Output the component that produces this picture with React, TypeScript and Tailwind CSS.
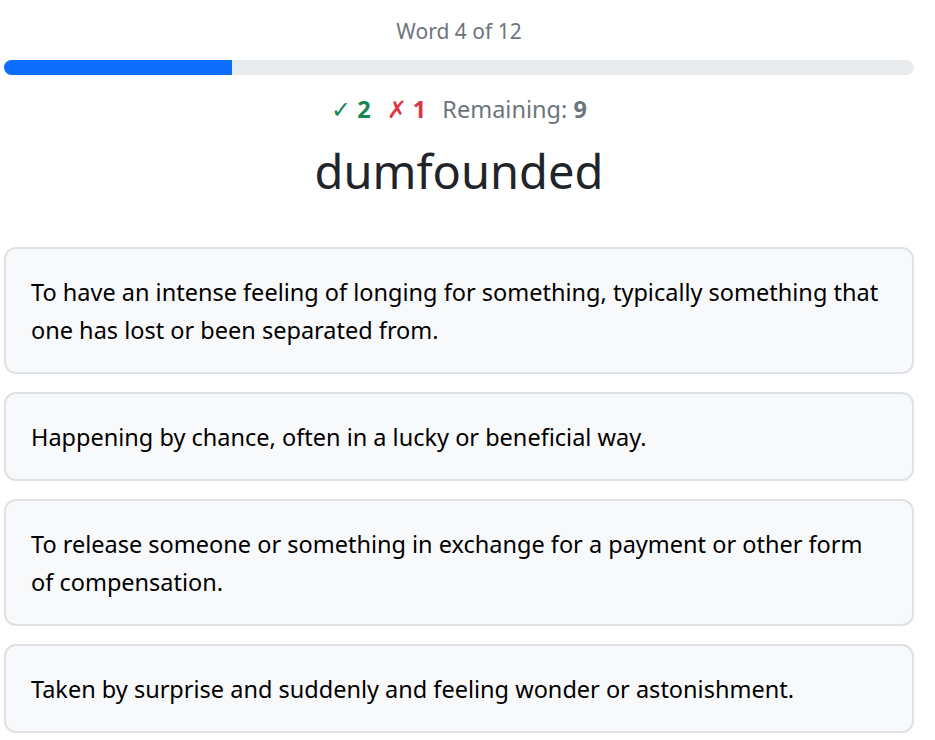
import React from "react";

const options = [
  "To have an intense feeling of longing for something, typically something that one has lost or been separated from.",
  "Happening by chance, often in a lucky or beneficial way.",
  "To release someone or something in exchange for a payment or other form of compensation.",
  "Taken by surprise and suddenly and feeling wonder or astonishment.",
];

export default function App() {
  return (
    <div
      className="min-h-screen bg-white pl-[4px] pr-[21px]"
      style={{ fontFamily: '"Noto Sans", "Open Sans", sans-serif' }}
    >
      <div className="flex flex-col">
        <div className="pt-[16px] text-center text-[21px] leading-[30px] text-[#6c757d]">Word 4 of 12</div>
        <div className="mt-[14px] h-[15px] w-full overflow-hidden rounded-full bg-[#e9ecef]">
          <div className="h-full bg-[#0d6efd]" style={{ width: "25%" }} />
        </div>
        <div className="mt-[18px] flex justify-center gap-[16px] text-[23.5px] leading-[32px]">
          <span className="text-[#198754]">
            <span className="font-['DejaVu_Sans'] font-light">✓</span> <b>2</b>
          </span>
          <span className="text-[#dc3545]">
            <span className="font-['DejaVu_Sans'] font-light">✗</span> <b>1</b>
          </span>
          <span className="text-[#6c757d]">Remaining: <b>9</b></span>
        </div>
        <div className="mt-[13px] text-center text-[47px] leading-[64px] text-[#212529]">dumfounded</div>
        <div className="mt-[44px] flex flex-col gap-[18px]">
          {options.map((t) => (
            <div
              key={t}
              className="rounded-[12px] border-2 border-[#dee2e6] bg-[#f8f9fa] py-[23.5px] pl-[25px] pr-[25px] text-[23.5px] leading-[38px] text-black"
            >
              {t}
            </div>
          ))}
        </div>
      </div>
    </div>
  );
}
